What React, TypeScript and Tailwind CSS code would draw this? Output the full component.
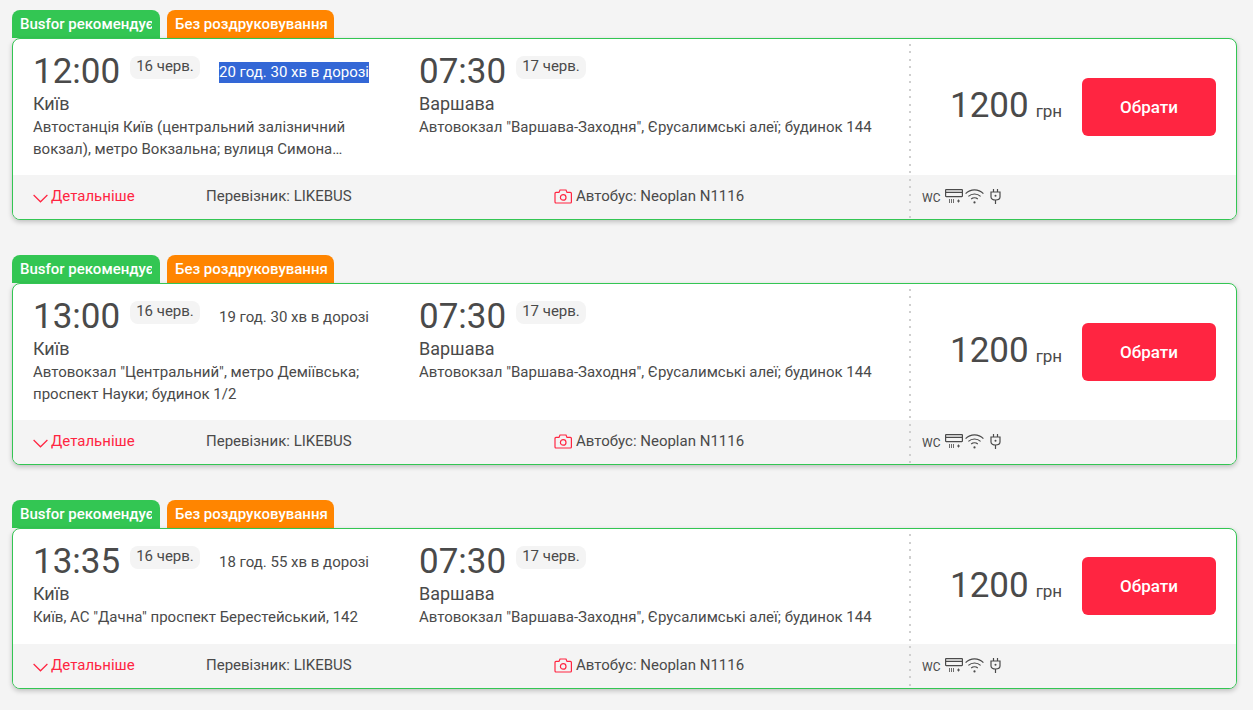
const trips = [
  {
    id: 1,
    departure: '12:00',
    duration: '20 год. 30 хв в дорозі',
    selected: true,
    address: ['Автостанція Київ (центральний залізничний', 'вокзал), метро Вокзальна; вулиця Симона…'],
  },
  {
    id: 2,
    departure: '13:00',
    duration: '19 год. 30 хв в дорозі',
    selected: false,
    address: ['Автовокзал "Центральний", метро Деміївська;', 'проспект Науки; будинок 1/2'],
  },
  {
    id: 3,
    departure: '13:35',
    duration: '18 год. 55 хв в дорозі',
    selected: false,
    address: ['Київ, АС "Дачна" проспект Берестейський, 142'],
  },
];

const ChevronIcon = () => (
  <svg width="15" height="9" viewBox="0 0 15 9" fill="none" stroke="#ff2541" strokeWidth="1.2" className="mt-[5px]">
    <path d="M0.6 1 L7.5 7.8 L14.4 1" />
  </svg>
);

const CameraIcon = () => (
  <svg width="18" height="15" viewBox="0 0 18 15" fill="none" stroke="#ff2541" strokeWidth="1.2">
    <path d="M2 3.4 H5 L6 1 H12 L13 3.4 H16.4 A1 1 0 0 1 17.4 4.4 V13 A1 1 0 0 1 16.4 14 H2 A1 1 0 0 1 1 13 V4.4 A1 1 0 0 1 2 3.4 Z" />
    <circle cx="9.2" cy="8.4" r="2.8" />
  </svg>
);

const ClimateIcon = () => (
  <svg width="18" height="15" viewBox="0 0 18 15" fill="none" stroke="#4a4a4a" strokeWidth="1.2">
    <rect x="0.6" y="0.6" width="16.8" height="7" rx="0.5" />
    <path d="M1 3.4 H17" />
    <path d="M4.5 10 V14 M6.5 10 V14 M8.5 10 V14" strokeWidth="0.8" />
    <path d="M12 12 H15 M13.5 10.5 V13.5" strokeWidth="0.9" />
  </svg>
);

const WifiIcon = () => (
  <svg width="19" height="15" viewBox="0 0 19 15" fill="none" stroke="#4a4a4a" strokeWidth="1.2">
    <path d="M0.6 4.6 C5.5 -0.4 13.5 -0.4 18.4 4.6" />
    <path d="M3.4 7.4 C6.8 4.2 12.2 4.2 15.6 7.4" />
    <path d="M6.2 10 C8 8.4 11 8.4 12.8 10" />
    <circle cx="9.5" cy="13.4" r="1.1" fill="#4a4a4a" stroke="none" />
  </svg>
);

const PlugIcon = () => (
  <svg width="11" height="15" viewBox="0 0 11 15" fill="none" stroke="#4a4a4a" strokeWidth="1.2">
    <path d="M3.5 0 V3 M7.5 0 V3" />
    <path d="M1 3 H10 V8 C10 10 8 11 5.5 11 C3 11 1 10 1 8 Z" />
    <path d="M5.5 11 V15" />
    <circle cx="5.5" cy="6.8" r="1" fill="#4a4a4a" stroke="none" />
  </svg>
);

const DateChip = ({ children }: { children: string }) => (
  <span className="flex h-[23px] w-[70px] items-center justify-center rounded-lg bg-[#f4f4f4] pb-[3px] text-[15px] text-[#4a4a4a]">
    {children}
  </span>
);

const TripCard = ({ trip }: { trip: (typeof trips)[number] }) => (
  <article>
    {/* Tabs above the card */}
    <div className="flex h-[28px] gap-[7px] text-[15px] font-medium text-white">
      <div className="w-[148px] rounded-t-lg bg-[#33c653] pl-2 pt-[3px]">
        <div className="w-[132px] overflow-hidden whitespace-nowrap">Busfor рекомендує</div>
      </div>
      <div className="w-[167px] rounded-t-lg bg-[#ff8500] pl-2 pt-[3px]">Без роздруковування</div>
    </div>

    <div className="relative grid grid-cols-[898px_1fr] overflow-hidden rounded-lg border border-[#33c653] bg-white shadow-[0_2px_5px_rgba(0,0,0,0.22)]">
      <div className="flex flex-col">
        <div className="flex min-h-[115px] flex-1 pl-5 pt-[10px] pb-[15px]">
          <div className="w-[386px]">
            <div className="flex items-start">
              <span className="h-[44px] w-[97px] text-[35px] leading-[46px] text-[#4a4a4a]">{trip.departure}</span>
              <div className="pt-[7px]">
                <DateChip>16 черв.</DateChip>
              </div>
              <span
                className={`ml-[19px] mt-[13px] h-[21px] text-[15px] leading-[21px] ${
                  trip.selected ? 'bg-[#3367d6] text-white' : 'text-[#4a4a4a]'
                }`}
              >
                {trip.duration}
              </span>
            </div>
            <div className="text-lg leading-[22px] text-[#4a4a4a]">Київ</div>
            <div className="mt-[1px] text-[15px] leading-[22px] text-[#4a4a4a]">
              {trip.address.map((line) => (
                <div key={line}>{line}</div>
              ))}
            </div>
          </div>
          <div>
            <div className="flex items-start">
              <span className="h-[44px] w-[97px] text-[35px] leading-[46px] text-[#4a4a4a]">07:30</span>
              <div className="pt-[7px]">
                <DateChip>17 черв.</DateChip>
              </div>
            </div>
            <div className="text-lg leading-[22px] text-[#4a4a4a]">Варшава</div>
            <div className="mt-[1px] text-[15px] leading-[22px] text-[#4a4a4a]">
              Автовокзал "Варшава-Заходня", Єрусалимські алеї; будинок 144
            </div>
          </div>
        </div>
        <div className="flex h-[44px] items-center bg-[#f4f4f4] pb-[2px] pl-5 text-[15px] text-[#4a4a4a]">
          <div className="flex w-[173px] items-center gap-[3px] text-[#ff2541]">
            <ChevronIcon />
            Детальніше
          </div>
          <div className="w-[348px]">Перевізник: LIKEBUS</div>
          <div className="flex items-center gap-1">
            <CameraIcon />
            Автобус: Neoplan N1116
          </div>
        </div>
      </div>

      <div className="flex flex-col">
        <div className="flex flex-1 items-center pb-[1px] pl-[39px]">
          <div className="flex w-[132px] items-baseline gap-[7px] text-[#4a4a4a]">
            <span className="text-[35px]">1200</span>
            <span className="text-[17px]">грн</span>
          </div>
          <button className="h-[58px] w-[134px] rounded-md bg-[#ff2541] pt-[2px] text-[17px] font-medium text-white">
            Обрати
          </button>
        </div>
        <div className="flex h-[44px] items-center bg-[#f4f4f4] pb-[2px] pl-[11px] text-[#4a4a4a]">
          <span className="mt-[3px] w-[23px] text-xs">WC</span>
          <ClimateIcon />
          <span className="ml-[2px]">
            <WifiIcon />
          </span>
          <span className="ml-[6px]">
            <PlugIcon />
          </span>
        </div>
      </div>

      {/* Dotted divider drawn over both the body and the footer */}
      <div className="absolute bottom-0 left-[896px] top-[5px] w-[2px] bg-[repeating-linear-gradient(to_bottom,#cfcfcf_0,#cfcfcf_2px,transparent_2px,transparent_7.5px)]" />
    </div>
  </article>
);

export default function App() {
  return (
    <main className="flex min-h-[710px] flex-col gap-[35px] bg-[#f4f4f4] pl-3 pr-4 pt-[10px] font-['Roboto',sans-serif]">
      {trips.map((trip) => (
        <TripCard key={trip.id} trip={trip} />
      ))}
    </main>
  );
}
